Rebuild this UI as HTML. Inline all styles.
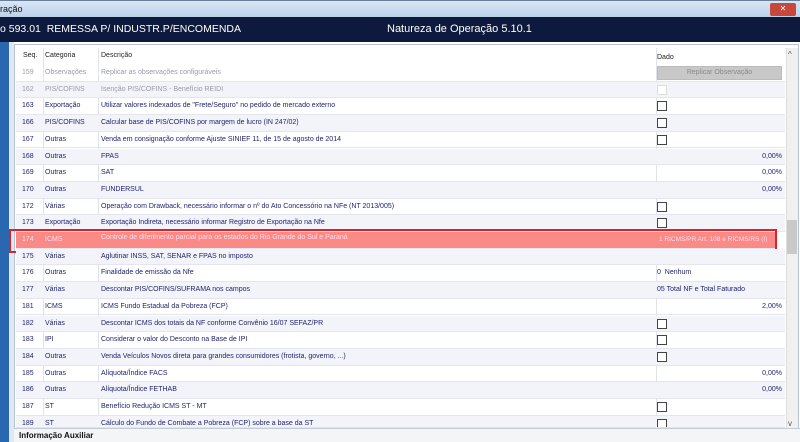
<!DOCTYPE html>
<html><head><meta charset="utf-8"><style>
*{margin:0;padding:0;box-sizing:border-box}
body{width:800px;height:442px;overflow:hidden;position:relative;background:#fff;font-family:"Liberation Sans",Tahoma,sans-serif;font-size:7px;color:#1c1f6b}
.tb{position:absolute;left:0;top:0;width:800px;height:17px;background:linear-gradient(#d8e6f5,#bcd2ea);border-top:1px solid #6a7f99;font-size:9px;color:#111;padding:3px 0 0 0}
.hd{position:absolute;left:0;top:17px;width:800px;height:25px;background:#0e1a3d;color:#fff}
.strip{position:absolute;left:0;top:42px;width:9px;height:400px;background:#2a67b1}
.strip2{position:absolute;left:9px;top:42px;width:5px;height:400px;background:#dfe8f3}
.panel{position:absolute;left:14px;top:44px;width:785px;height:385px;border:1px solid #b9c2cf;background:#fff}
.row{position:absolute;left:16px;width:769px;height:16.7px;border-bottom:1px solid #e3e6ee}
.row.alt{background:#f2f4f9}
.row span{position:absolute;top:4px;white-space:nowrap}
.c1{left:6px}.c2{left:29px}.c3{left:85px}.c4{left:641px}.c5{right:3px}
.vl{position:absolute;top:48px;width:1px;height:380px;background:#e0e3ea}
.cb{position:absolute;left:641px;top:3px;width:10px;height:10px;border:1px solid #444;background:#fff}
.g{color:#9a9aa8}
</style></head><body>
<div class="tb">ração<div style="position:absolute;right:4px;top:2px;width:26px;height:13px;background:#c9473a;border-radius:2px;color:#fff;text-align:center;font-size:8px;line-height:12px">✕</div></div>
<div class="hd"><span style="position:absolute;left:0;top:6px;font-size:10.5px">o 593.01&nbsp; REMESSA P/ INDUSTR.P/ENCOMENDA</span><span style="position:absolute;left:387px;top:6px;font-size:11px">Natureza de Operação 5.10.1</span></div>
<div class="strip"></div><div class="strip2"></div>
<div class="panel"></div>
<div class="vl" style="left:43px"></div><div class="vl" style="left:98px"></div><div class="vl" style="left:656px"></div>
<div class="row" style="top:48px;height:17px;border:none"><span class="c1" style="color:#222;left:7px">Seq.</span><span class="c2" style="color:#222">Categoria</span><span class="c3" style="color:#222">Descrição</span><span class="c4" style="color:#222;top:6px">Dado</span></div>
<div style="position:absolute;left:786px;top:48px;width:12px;height:380px;background:#f0f0f0;border-left:1px solid #ddd"></div>
<div style="position:absolute;left:787px;top:220px;width:10px;height:34px;background:#c9c9c9"></div>
<div style="position:absolute;left:788px;top:50px;font-size:8px;color:#555">^</div>
<div style="position:absolute;left:788px;top:419px;font-size:8px;color:#555">v</div>

<div class="row" style="top:65px"><span class="c1 g">159</span><span class="c2 g">Observações</span><span class="c3 g">Replicar as observações configuráveis</span><div style="position:absolute;left:641px;top:1px;width:125px;height:14px;background:#c8c8c8;border:1px solid #bbb;color:#8a8a8a;text-align:center;line-height:12px">Replicar Observação</div></div>
<div class="row alt" style="top:81.7px"><span class="c1 g">162</span><span class="c2 g">PIS/COFINS</span><span class="c3 g">Isenção PIS/COFINS - Benefício REIDI</span><div class="cb" style="border-color:#ddd"></div></div>
<div class="row" style="top:98.4px"><span class="c1">163</span><span class="c2">Exportação</span><span class="c3">Utilizar valores indexados de "Frete/Seguro" no pedido de mercado externo</span><div class="cb"></div></div>
<div class="row alt" style="top:115.1px"><span class="c1">166</span><span class="c2">PIS/COFINS</span><span class="c3">Calcular base de PIS/COFINS por margem de lucro (IN 247/02)</span><div class="cb"></div></div>
<div class="row" style="top:131.8px"><span class="c1">167</span><span class="c2">Outras</span><span class="c3">Venda em consignação conforme Ajuste SINIEF 11, de 15 de agosto de 2014</span><div class="cb"></div></div>
<div class="row alt" style="top:148.5px"><span class="c1">168</span><span class="c2">Outras</span><span class="c3">FPAS</span><span class="c5">0,00%</span></div>
<div class="row" style="top:165.2px"><span class="c1">169</span><span class="c2">Outras</span><span class="c3">SAT</span><span class="c5">0,00%</span></div>
<div class="row alt" style="top:181.9px"><span class="c1">170</span><span class="c2">Outras</span><span class="c3">FUNDERSUL</span><span class="c5">0,00%</span></div>
<div class="row" style="top:198.6px"><span class="c1">172</span><span class="c2">Várias</span><span class="c3">Operação com Drawback, necessário informar o nº do Ato Concessório na NFe (NT 2013/005)</span><div class="cb"></div></div>
<div class="row alt" style="top:215.3px"><span class="c1">173</span><span class="c2">Exportação</span><span class="c3">Exportação Indireta, necessário informar Registro de Exportação na Nfe</span><div class="cb"></div></div>
<div class="row" style="top:232px;width:760px;background:#f98a86;color:#fde"><span class="c1">174</span><span class="c2">ICMS</span><span class="c3" style="top:2px">Controle de diferimento parcial para os estados do Rio Grande do Sul e Paraná</span><span class="c4" style="top:4px;left:643px;font-size:6.5px">1 RICMS/PR Art. 108 e RICMS/RS (I)</span></div>
<div style="position:absolute;left:9px;top:229px;width:768px;height:24px;border:2px solid #d8232a"></div>
<div class="row alt" style="top:248.7px"><span class="c1">175</span><span class="c2">Várias</span><span class="c3">Aglutinar INSS, SAT, SENAR e FPAS no imposto</span></div>
<div class="row" style="top:265.4px"><span class="c1">176</span><span class="c2">Outras</span><span class="c3">Finalidade de emissão da Nfe</span><span class="c4">0&nbsp; Nenhum</span></div>
<div class="row alt" style="top:282.1px"><span class="c1">177</span><span class="c2">Várias</span><span class="c3">Descontar PIS/COFINS/SUFRAMA nos campos</span><span class="c4">05 Total NF e Total Faturado</span></div>
<div class="row" style="top:298.8px"><span class="c1">181</span><span class="c2">ICMS</span><span class="c3">ICMS Fundo Estadual da Pobreza (FCP)</span><span class="c5">2,00%</span></div>
<div class="row alt" style="top:315.5px"><span class="c1">182</span><span class="c2">Várias</span><span class="c3">Descontar ICMS dos totais da NF conforme Convênio 16/07 SEFAZ/PR</span><div class="cb"></div></div>
<div class="row" style="top:332.2px"><span class="c1">183</span><span class="c2">IPI</span><span class="c3">Considerar o valor do Desconto na Base de IPI</span><div class="cb"></div></div>
<div class="row alt" style="top:348.9px"><span class="c1">184</span><span class="c2">Outras</span><span class="c3">Venda Veículos Novos direta para grandes consumidores (frotista, governo, ...)</span><div class="cb"></div></div>
<div class="row" style="top:365.6px"><span class="c1">185</span><span class="c2">Outras</span><span class="c3">Alíquota/Índice FACS</span><span class="c5">0,00%</span></div>
<div class="row alt" style="top:382.3px"><span class="c1">186</span><span class="c2">Outras</span><span class="c3">Alíquota/Índice FETHAB</span><span class="c5">0,00%</span></div>
<div class="row" style="top:399px"><span class="c1">187</span><span class="c2">ST</span><span class="c3">Benefício Redução ICMS ST - MT</span><div class="cb"></div></div>
<div class="row alt" style="top:415.7px;height:12px;overflow:hidden"><span class="c1">189</span><span class="c2">ST</span><span class="c3">Cálculo do Fundo de Combate a Pobreza (FCP) sobre a base da ST</span><div class="cb"></div></div>
<div style="position:absolute;left:14px;top:428px;width:786px;height:14px;background:#f4f5f7;border-top:1px solid #c5cbd4"><span style="position:absolute;left:5px;top:2px;font-weight:bold;color:#111;font-size:8px">Informação Auxiliar</span></div>
</body></html>
